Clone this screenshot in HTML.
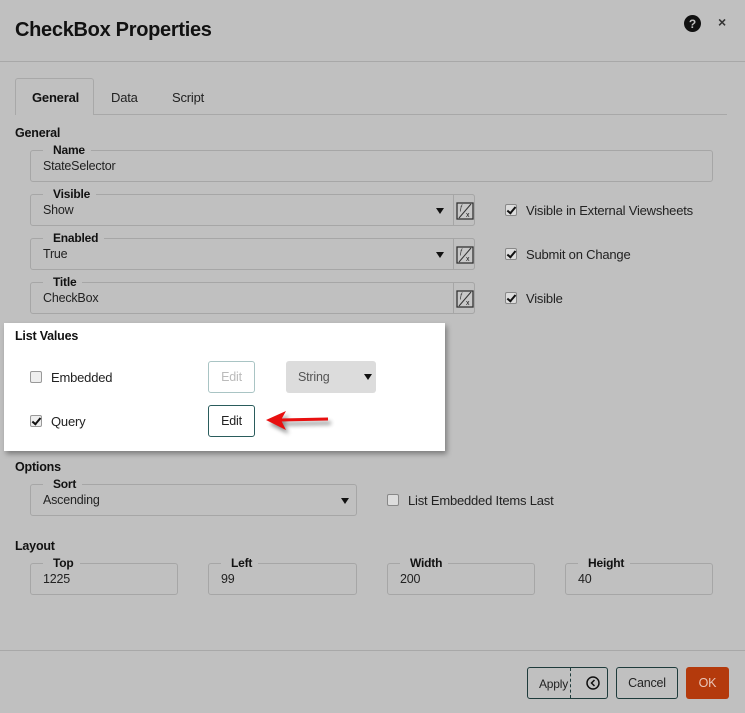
<!DOCTYPE html>
<html><head><meta charset="utf-8"><style>
*{box-sizing:border-box;margin:0;padding:0}
body{width:745px;height:713px;background:#c0c0c0;font-family:"Liberation Sans",sans-serif;font-size:12.5px;color:#222;position:relative;overflow:hidden;letter-spacing:-0.2px}
.a{position:absolute}
.box{position:absolute;border:1px solid #a6a6a6;border-radius:3px}
.lg{position:absolute;top:-9px;left:12px;background:#c0c0c0;padding:0 6px 0 10px;font-weight:bold;font-size:12px;line-height:16px;color:#111}
.val{position:absolute;left:12px;top:8px;font-size:12.5px;color:#222}
.sec{position:absolute;left:15px;font-weight:bold;font-size:12.5px;color:#111}
.fx{position:absolute;right:-1px;top:-1px;width:22px;height:32px;border:1px solid #a6a6a6;border-radius:0 3px 3px 0;background:#c0c0c0}
.fx svg{position:absolute;left:2px;top:7px}
.cb{position:absolute;width:12px;height:12px;border:1px solid #888;border-radius:2px;background:#ddd}
.cb.on::after{content:"";position:absolute;left:3px;top:0px;width:3px;height:7px;border:solid #111;border-width:0 2px 2px 0;transform:rotate(40deg)}
.ct{position:absolute;font-size:13px;color:#222}
.tri{position:absolute;width:0;height:0;border-left:4px solid transparent;border-right:4px solid transparent;border-top:6px solid #111}
.btn{position:absolute;border:1px solid #1e3b3b;border-radius:3px;text-align:center;font-size:12.5px;color:#222}
</style></head><body>
<div class="a" style="left:15px;top:19px;font-size:20px;font-weight:bold;color:#111;letter-spacing:-0.3px">CheckBox Properties</div>
<svg class="a" style="left:684px;top:15px" width="17" height="17"><circle cx="8.5" cy="8.5" r="8.5" fill="#111"/><text x="8.5" y="13" font-family="Liberation Sans" font-weight="bold" font-size="12" fill="#c0c0c0" text-anchor="middle">?</text></svg>
<div class="a" style="left:718px;top:14px;font-size:14px;font-weight:bold;color:#333">×</div>
<div class="a" style="left:0;top:61px;width:745px;height:1px;background:#a8a8a8"></div>
<div class="a" style="left:15px;top:114px;width:712px;height:1px;background:#a8a8a8"></div>
<div class="a" style="left:15px;top:78px;width:79px;height:37px;border:1px solid #a8a8a8;border-bottom:none;border-radius:3px 3px 0 0;background:#c0c0c0"></div>
<div class="a" style="left:32px;top:90px;font-weight:bold;font-size:13px;color:#111">General</div>
<div class="a" style="left:111px;top:90px;font-size:13px">Data</div>
<div class="a" style="left:172px;top:90px;font-size:13px">Script</div>
<div class="sec" style="top:126px">General</div>
<div class="box" style="left:30px;top:150px;width:683px;height:32px"><span class="lg">Name</span><span class="val">StateSelector</span></div>
<div class="box" style="left:30px;top:194px;width:445px;height:32px"><span class="lg">Visible</span><span class="val">Show</span><span class="tri" style="left:405px;top:13px"></span><div class="fx"><svg width="18" height="18"><rect x="1" y="1" width="16" height="16" fill="#c8c8c8" stroke="#333" stroke-width="1.3"/><line x1="3" y1="16" x2="15" y2="2" stroke="#333"/><text x="4" y="8" font-size="7" font-style="italic" fill="#111" font-family="Liberation Serif">f</text><text x="10" y="15" font-size="7" fill="#111" font-family="Liberation Sans">x</text></svg></div></div>
<div class="cb on" style="left:505px;top:204px"></div><div class="ct" style="left:526px;top:203px">Visible in External Viewsheets</div>
<div class="box" style="left:30px;top:238px;width:445px;height:32px"><span class="lg">Enabled</span><span class="val">True</span><span class="tri" style="left:405px;top:13px"></span><div class="fx"><svg width="18" height="18"><rect x="1" y="1" width="16" height="16" fill="#c8c8c8" stroke="#333" stroke-width="1.3"/><line x1="3" y1="16" x2="15" y2="2" stroke="#333"/><text x="4" y="8" font-size="7" font-style="italic" fill="#111" font-family="Liberation Serif">f</text><text x="10" y="15" font-size="7" fill="#111" font-family="Liberation Sans">x</text></svg></div></div>
<div class="cb on" style="left:505px;top:248px"></div><div class="ct" style="left:526px;top:247px">Submit on Change</div>
<div class="box" style="left:30px;top:282px;width:445px;height:32px"><span class="lg">Title</span><span class="val">CheckBox</span><div class="fx"><svg width="18" height="18"><rect x="1" y="1" width="16" height="16" fill="#c8c8c8" stroke="#333" stroke-width="1.3"/><line x1="3" y1="16" x2="15" y2="2" stroke="#333"/><text x="4" y="8" font-size="7" font-style="italic" fill="#111" font-family="Liberation Serif">f</text><text x="10" y="15" font-size="7" fill="#111" font-family="Liberation Sans">x</text></svg></div></div>
<div class="cb on" style="left:505px;top:292px"></div><div class="ct" style="left:526px;top:291px">Visible</div>

<div class="a" style="left:4px;top:323px;width:441px;height:128px;background:#fff;box-shadow:2px 3px 5px rgba(0,0,0,0.35)"></div>
<div class="sec" style="top:329px">List Values</div>
<div class="cb" style="left:30px;top:371px;background:#eee;border-color:#999"></div><div class="ct" style="left:51px;top:370px">Embedded</div>
<div class="btn" style="left:208px;top:361px;width:47px;height:32px;line-height:30px;border-color:#a9c4c4;color:#bbb">Edit</div>
<div class="a" style="left:286px;top:361px;width:90px;height:32px;background:#dcdcdc;border-radius:3px"><span class="a" style="left:12px;top:9px;font-size:12.5px;color:#555">String</span><span class="tri" style="left:78px;top:13px"></span></div>
<div class="cb on" style="left:30px;top:415px;background:#eee;border-color:#999"></div><div class="ct" style="left:51px;top:414px">Query</div>
<div class="btn" style="left:208px;top:405px;width:47px;height:32px;line-height:30px;border-color:#2a5c5c">Edit</div>
<svg class="a" style="left:262px;top:404px" width="80" height="34"><defs><filter id="b" x="-20%" y="-50%" width="140%" height="200%"><feGaussianBlur stdDeviation="2"/></filter></defs><g filter="url(#b)" opacity="0.45" transform="translate(3,4)"><line x1="18" y1="16" x2="66" y2="15" stroke="#000" stroke-width="3"/><polygon points="4,16 24,7 19,16 24,26" fill="#000"/></g><line x1="18" y1="16" x2="66" y2="15" stroke="#e81010" stroke-width="3"/><polygon points="4,16 24,7 19,16 24,26" fill="#e81010"/></svg>

<div class="sec" style="top:460px">Options</div>
<div class="box" style="left:30px;top:484px;width:327px;height:32px"><span class="lg">Sort</span><span class="val">Ascending</span><span class="tri" style="left:310px;top:13px"></span></div>
<div class="cb" style="left:387px;top:494px"></div><div class="ct" style="left:408px;top:493px">List Embedded Items Last</div>
<div class="sec" style="top:539px">Layout</div>
<div class="box" style="left:30px;top:563px;width:148px;height:32px"><span class="lg">Top</span><span class="val">1225</span></div>
<div class="box" style="left:208px;top:563px;width:149px;height:32px"><span class="lg">Left</span><span class="val">99</span></div>
<div class="box" style="left:387px;top:563px;width:148px;height:32px"><span class="lg">Width</span><span class="val">200</span></div>
<div class="box" style="left:565px;top:563px;width:148px;height:32px"><span class="lg">Height</span><span class="val">40</span></div>
<div class="a" style="left:0;top:650px;width:745px;height:1px;background:#a8a8a8"></div>
<div class="btn" style="left:527px;top:667px;width:81px;height:32px;line-height:30px"><span class="a" style="left:11px;top:1px;font-size:12px">Apply</span><span class="a" style="left:42px;top:0;height:30px;border-left:1px dashed #1e3b3b"></span><svg class="a" style="left:58px;top:8px" width="14" height="14"><circle cx="7" cy="7" r="6" fill="none" stroke="#111" stroke-width="1.5"/><polyline points="8.5,4 5.5,7 8.5,10" fill="none" stroke="#111" stroke-width="1.5"/></svg></div>
<div class="btn" style="left:616px;top:667px;width:62px;height:32px;line-height:30px">Cancel</div>
<div class="a" style="left:686px;top:667px;width:43px;height:32px;line-height:32px;background:#b43a0c;border-radius:3px;color:#e9c6b8;text-align:center;font-size:12.5px">OK</div>
</body></html>
